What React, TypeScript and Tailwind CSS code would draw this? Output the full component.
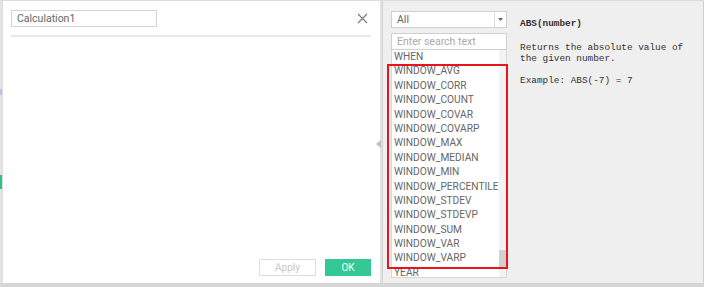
import React from 'react';

const functions = [
  'WHEN',
  'WINDOW_AVG',
  'WINDOW_CORR',
  'WINDOW_COUNT',
  'WINDOW_COVAR',
  'WINDOW_COVARP',
  'WINDOW_MAX',
  'WINDOW_MEDIAN',
  'WINDOW_MIN',
  'WINDOW_PERCENTILE',
  'WINDOW_STDEV',
  'WINDOW_STDEVP',
  'WINDOW_SUM',
  'WINDOW_VAR',
  'WINDOW_VARP',
  'YEAR',
];

export default function App() {
  return (
    <div className="w-[704px] h-[287px] flex flex-col bg-[#d6d6d6] overflow-hidden font-['Roboto',sans-serif]">
      <div className="flex h-[283px] border-t border-[#dcdcdc]">
        {/* edge of the workbook behind the dialog */}
        <div className="w-[2px] flex flex-col bg-[#e4e4e4]">
          <div className="h-[88px]" />
          <div className="h-[6px] bg-[#b9c6e0]" />
          <div className="h-[80px]" />
          <div className="h-[14px] bg-[#2fbf83]" />
        </div>

        {/* editor */}
        <div className="w-[378px] bg-white border-l border-[#dedede] flex flex-col px-[8px] pt-[9px] pb-[6px] relative">
          <div className="flex items-center justify-between">
            <div className="w-[146px] h-[17px] border border-[#d4d4d4] flex items-center pl-[5px] text-[10.5px] text-[#666]">
              Calculation1
            </div>
            <svg width="11" height="11" viewBox="0 0 11 11" className="mr-[4px]">
              <path d="M1 1 L10 10 M10 1 L1 10" stroke="#777" strokeWidth="1.1" />
            </svg>
          </div>
          <div className="mt-[8px] mr-[1px] h-[2px] bg-[#e8e8e8]" />
          <div className="flex-1" />
          <div className="flex justify-end gap-[9px] mr-[1px] mb-[1px]">
            <div className="w-[57px] h-[17px] border border-[#dedede] flex items-center justify-center text-[10px] text-[#c8c8c8]">
              Apply
            </div>
            <div className="w-[46px] h-[17px] bg-[#34c994] flex items-center justify-center text-[10px] text-white">
              OK
            </div>
          </div>
          <svg width="5" height="8" viewBox="0 0 5 8" className="absolute right-[-1px] top-[139px]">
            <path d="M5 0 L0 4 L5 8 Z" fill="#bdbdbd" />
          </svg>
        </div>

        <div className="w-[3px] bg-[#e2e2e2] border-r border-[#d2d2d2]" />

        {/* reference panel */}
        <div className="flex-1 bg-[#efefef] border-r border-[#cfcfcf] flex pl-[8px] pt-[10px]">
          <div className="w-[116px] flex flex-col">
            <div className="h-[17px] bg-white border border-[#d0d0d0] flex items-center text-[10.5px] text-[#666]">
              <span className="flex-1 pl-[5px]">All</span>
              <div className="w-[12px] h-full border-l border-[#dcdcdc] flex items-center justify-center">
                <svg width="5" height="3" viewBox="0 0 5 3">
                  <path d="M0 0 L5 0 L2.5 3 Z" fill="#666" />
                </svg>
              </div>
            </div>
            <div className="mt-[5px] h-[17px] bg-white border border-[#d0d0d0] flex items-center pl-[5px] text-[10.5px] text-[#aaa]">
              Enter search text
            </div>
            <div className="relative">
              <div className="h-[228px] bg-white border border-t-0 border-[#d8d8d8] flex overflow-hidden">
                <div className="flex-1 pl-[2px]">
                  {functions.map((f) => (
                    <div key={f} className="h-[14.4px] leading-[14.4px] text-[10.2px] text-[#666] whitespace-nowrap">
                      {f}
                    </div>
                  ))}
                </div>
                <div className="w-[8px] bg-[#f3f3f3] flex flex-col">
                  <div className="h-[200px]" />
                  <div className="h-[18px] bg-[#d0d0d0]" />
                </div>
              </div>
              <div className="absolute left-[-4px] top-[14px] w-[121px] h-[205px] border-2 border-[#e8131b]" />
            </div>
          </div>
          <div className="ml-[13px] pt-[7px] font-['Liberation_Mono',monospace] text-[9.4px] leading-[11px] text-[#333]">
            <div className="font-bold">ABS(number)</div>
            <div className="mt-[13px]">Returns the absolute value of</div>
            <div>the given number.</div>
            <div className="mt-[11px]">Example: ABS(-7) = 7</div>
          </div>
        </div>
      </div>
    </div>
  );
}
